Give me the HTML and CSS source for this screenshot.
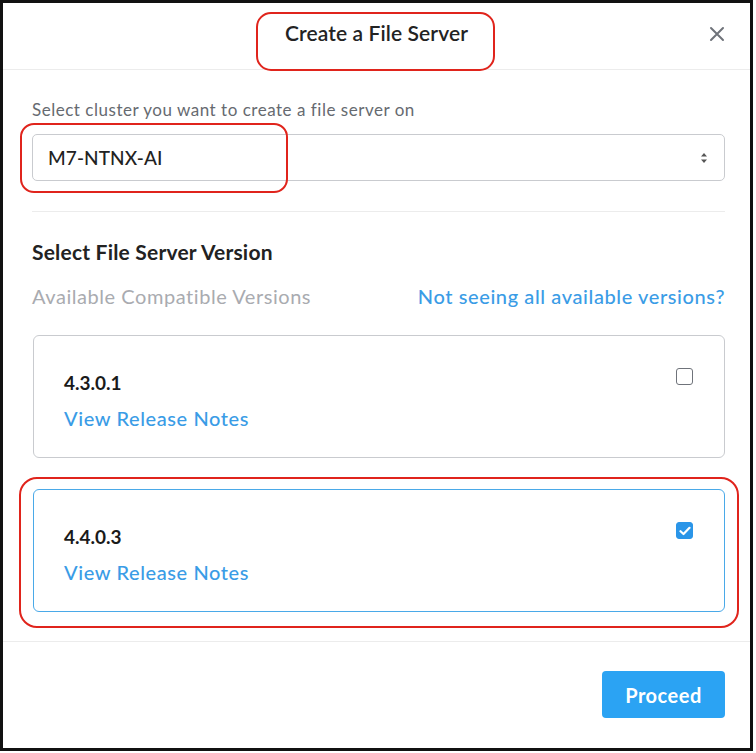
FILE: index.html
```html
<!DOCTYPE html>
<html>
<head>
<meta charset="utf-8">
<link rel="stylesheet" href="styles.css">
</head>
<body>
<div class="frame">
  <header class="header">
    <div class="title">Create a File Server</div>
    <button class="close" aria-label="Close">
      <svg width="16" height="16" viewBox="0 0 16 16"><path d="M2 2 L14 14 M14 2 L2 14" stroke="#6f737a" stroke-width="2" stroke-linecap="round"/></svg>
    </button>
  </header>
  <main class="content">
    <label class="label">Select cluster you want to create a file server on</label>
    <div class="select">
      <span class="select-value">M7-NTNX-AI</span>
      <svg class="arrows" width="8" height="12" viewBox="0 0 8 12"><path d="M4 1 L7 4.5 L1 4.5 Z M4 11 L7 7.5 L1 7.5 Z" fill="#555"/></svg>
    </div>
    <div class="divider"></div>
    <h2 class="section-title">Select File Server Version</h2>
    <div class="versions-row">
      <span class="muted">Available Compatible Versions</span>
      <a class="link">Not seeing all available versions?</a>
    </div>
    <div class="cards">
      <div class="card">
        <div class="card-text">
          <div class="version">4.3.0.1</div>
          <a class="link notes">View Release Notes</a>
        </div>
        <span class="checkbox"></span>
      </div>
      <div class="card selected">
        <div class="card-text">
          <div class="version">4.4.0.3</div>
          <a class="link notes">View Release Notes</a>
        </div>
        <span class="checkbox checked">
          <svg width="12" height="10" viewBox="0 0 12 10"><path d="M1.5 5.2 L4.5 8 L10.5 1.8" stroke="#fff" stroke-width="2.2" fill="none" stroke-linecap="round" stroke-linejoin="round"/></svg>
        </span>
      </div>
    </div>
  </main>
  <footer class="footer">
    <button class="proceed">Proceed</button>
  </footer>
  <div class="mark mark-title"></div>
  <div class="mark mark-select"></div>
  <div class="mark mark-card"></div>
</div>
</body>
</html>
```

FILE: styles.css
```css
* { box-sizing: border-box; }
html, body { margin: 0; padding: 0; background: #fff; }
body { font-family: Lato, "Noto Sans", sans-serif; color: #222; }

.frame {
  position: relative;
  width: 753px;
  height: 751px;
  border: 3px solid #111;
  display: flex;
  flex-direction: column;
  background: #fff;
}

.header {
  height: 67px;
  border-bottom: 1px solid #ececec;
  display: flex;
  align-items: center;
  justify-content: center;
  position: relative;
  padding-bottom: 8px;
}
.title {
  font-size: 21px;
  font-weight: 600;
  color: #232323;
  letter-spacing: 0.1px;
}
.close {
  position: absolute;
  right: 25px;
  top: 23px;
  background: none;
  border: 0;
  padding: 0;
  width: 16px;
  height: 16px;
  display: flex;
}

.content {
  flex: 1;
  padding: 31px 25px 0 29px;
  display: flex;
  flex-direction: column;
}
.label {
  font-size: 17px;
  color: #666a70;
  line-height: 18px;
  letter-spacing: 0.52px;
}
.select {
  margin-top: 15px;
  height: 47px;
  border: 1px solid #c9cbcf;
  border-radius: 5px;
  display: flex;
  align-items: center;
  justify-content: space-between;
  padding: 0 16px 0 15px;
}
.select-value {
  font-size: 19px;
  color: #222;
  font-weight: 500;
  letter-spacing: 0.1px;
}
.divider {
  margin-top: 30px;
  border-top: 1px solid #ececec;
}
.section-title {
  margin: 29px 0 0;
  font-size: 21px;
  font-weight: 700;
  color: #222;
  line-height: 22px;
  letter-spacing: 0.2px;
}
.versions-row {
  margin-top: 22px;
  display: flex;
  justify-content: space-between;
  align-items: center;
  line-height: 22px;
}
.muted {
  font-size: 20px;
  color: #a9abb0;
  letter-spacing: 0.55px;
}
.link {
  color: #3a9ce6;
  font-size: 20px;
  font-weight: 500;
  letter-spacing: 0.6px;
}
.cards {
  margin-top: 28px;
  display: flex;
  flex-direction: column;
  gap: 31px;
}
.card {
  height: 123px;
  border: 1px solid #c9cbcf;
  border-radius: 6px;
  display: flex;
  justify-content: space-between;
  align-items: flex-start;
  padding: 32px 31px 0 30px;
  margin-left: 1px;
}
.card.selected {
  border-color: #4aa9e8;
}
.card-text { display: flex; flex-direction: column; }
.version {
  font-size: 19px;
  font-weight: 700;
  color: #1a1a1a;
  line-height: 22px;
  margin-top: 4px;
}
.notes {
  font-size: 20px;
  margin-top: 13px;
  line-height: 22px;
}
.checkbox {
  width: 17px;
  height: 17px;
  border: 1.6px solid #6f737a;
  border-radius: 3px;
  display: flex;
  align-items: center;
  justify-content: center;
}
.checkbox.checked {
  background: #2a95e8;
  border-color: #2a95e8;
}

.footer {
  height: 107px;
  border-top: 1px solid #ececec;
  display: flex;
  justify-content: flex-end;
  align-items: flex-start;
  padding: 29px 25px 0 0;
}
.proceed {
  width: 123px;
  height: 47px;
  background: #2ba3f3;
  color: #fff;
  border: 0;
  border-radius: 4px;
  font-family: Lato, "Noto Sans", sans-serif;
  font-size: 20px;
  font-weight: 700;
  letter-spacing: 0.5px;
}

.mark {
  position: absolute;
  border: 2.5px solid #e0241c;
  pointer-events: none;
}
.mark-title {
  left: 253px; top: 9px; width: 239px; height: 59px;
  border-radius: 15px;
}
.mark-select {
  left: 17px; top: 120px; width: 268px; height: 70px;
  border-radius: 14px;
}
.mark-card {
  left: 16px; top: 474px; width: 720px; height: 151px;
  border-radius: 18px;
}
```
